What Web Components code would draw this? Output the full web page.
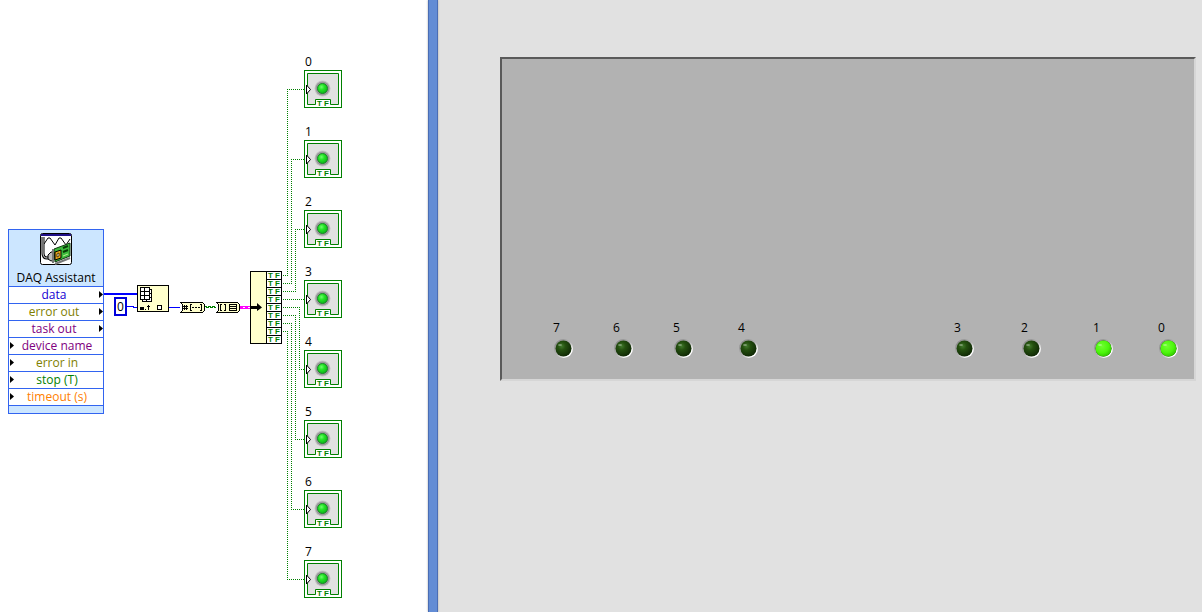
<!DOCTYPE html>
<html lang="en">
<head>
<meta charset="utf-8">
<title>DAQ block diagram and front panel</title>
<style>
body { margin: 0; font: 12px/16px "Open Sans", "Noto Sans", sans-serif; color: #000; }
</style>
</head>
<body>
<vi-workspace></vi-workspace>
<script>
const define = (name, html, setup) => {
  const template = document.createElement('template');
  template.innerHTML = html;
  customElements.define(name, class extends HTMLElement {
    constructor() {
      super();
      this.attachShadow({ mode: 'open' }).append(template.content.cloneNode(true));
    }
    connectedCallback() { if (setup) setup(this, this.shadowRoot); }
  });
};

/* Boolean indicator terminal on the block diagram */
define('bool-terminal', `
<style>
:host { display: grid; grid-template-rows: 16px 38px; width: 38px; }
.label { padding-left: 1px; }
.box { position: relative; height: 38px; }
svg { display: block; }
.tf { position: absolute; left: 11px; width: 16px; bottom: 0; font: bold 8px/8px "Liberation Sans", sans-serif; color: #008000; text-align: center; white-space: nowrap; }
</style>
<div class="label"><slot></slot></div>
<div class="box">
<svg width="38" height="38" viewBox="0 0 38 38" aria-hidden="true">
<defs><radialGradient id="g" cx=".4" cy=".35" r=".7"><stop offset="0" stop-color="#6dff6d"/><stop offset=".4" stop-color="#25e525"/><stop offset="1" stop-color="#08b018"/></radialGradient></defs>
<rect x=".5" y=".5" width="37" height="37" fill="#fff" stroke="#008000"/>
<path d="M3.500 3.500H34.500V34.500H26.500V29.500H11.500V34.500H3.500Z" fill="#e1e1e1" stroke="#008000"/>
<circle cx="18.500" cy="18.500" r="8" fill="#c4c4c4"/>
<circle cx="18.500" cy="18.500" r="7" fill="#999"/>
<circle cx="18.500" cy="18.500" r="5" fill="url(#g)" stroke="#188a28"/>
<path d="M2.500 15V24L6.500 19.500Z" fill="#fff" stroke="#000"/>
</svg><span class="tf">T F</span></div>`);

/* Express VI node */
define('daq-port', `
<style>
:host { display: block; position: relative; height: 16px; border-top: 1px solid #3264f0; background: #fff; text-align: center; line-height: 16px; color: var(--port-color); }
:host([dir=in]) { padding-left: 2px; }
:host([dir=out]) { padding-right: 4px; }
svg { position: absolute; top: 4px; left: 1px; }
:host([dir=out]) svg { left: auto; right: 0; }
</style>
<slot></slot><svg width="4" height="7" aria-hidden="true"><path d="M0 0L4 3.500L0 7Z" fill="#000"/></svg>`);

define('daq-node', `
<style>
:host { display: block; box-sizing: border-box; width: 96px; border: 1px solid #3264f0; background: #cce6ff; }
header { height: 56px; text-align: center; }
header svg { display: block; margin: 0 auto; padding-top: 3px; }
header span { display: block; padding-top: 5px; }
footer { height: 7px; border-top: 1px solid #3264f0; }
</style>
<header>
<svg width="32" height="32" viewBox="0 0 32 32" aria-hidden="true">
<rect x=".5" y=".5" width="31" height="31" rx="2" fill="#fff" stroke="#000"/>
<path d="M1 1H31V3H1Z" fill="#20108a"/>
<path d="M4 11L8 5L10 5L15 12L19 5L21 5L26 12L30 6" fill="none" stroke="#000"/>
<path d="M3 4V20Q3 25 7 25H11" fill="none" stroke="#000" stroke-width="3"/>
<path d="M3 4V20Q3 25 7 25H11" fill="none" stroke="#e4e4e4"/>
<path d="M8 22L11 19L14 19V27L11 28L8 26Z" fill="#bbb" stroke="#000"/>
<path d="M14 16L30 10V23L15 29Z" fill="#3cba3c" stroke="#123812"/>
<path d="M15 31L30 25M13 16V30" stroke="#777" stroke-width="2"/>
<path d="M15 19L21 17V25L15 27Z" fill="#e0a018" stroke="#000"/>
<path d="M17 21L19 20V23L17 24Z" fill="#fff" stroke="#543800"/>
<path d="M23 15L28 13M23 19L28 17" stroke="#063c06" stroke-width="2"/>
<path d="M23 23L28 21" stroke="#b7ef90"/>
</svg>
<span>DAQ Assistant</span></header>
<daq-port dir="out" style="--port-color:#1400d2">data</daq-port>
<daq-port dir="out" style="--port-color:#808000">error out</daq-port>
<daq-port dir="out" style="--port-color:#800080">task out</daq-port>
<daq-port dir="in" style="--port-color:#800080">device name</daq-port>
<daq-port dir="in" style="--port-color:#808000">error in</daq-port>
<daq-port dir="in" style="--port-color:#008000">stop (T)</daq-port>
<daq-port dir="in" style="--port-color:#ff8000">timeout (s)</daq-port>
<footer></footer>`);

/* Numeric constant */
define('num-constant', `
<style>
:host { display: block; box-sizing: border-box; width: 13px; height: 19px; border: 2px solid #0000dc; background: #fff; line-height: 15px; text-align: center; }
</style><slot></slot>`);

/* Splitter with nine Boolean rows */
define('bool-splitter', `
<style>
:host { display: grid; grid-template-columns: 15px 14px; gap: 1px; box-sizing: border-box; width: 32px; border: 1px solid #000; background: #000; }
.body { background: #ffffcc; display: flex; align-items: center; }
ol { list-style: none; margin: 0; padding: 0; display: grid; grid-auto-rows: 7px; gap: 1px; }
li { background: #fff; color: #008000; font: bold 8px/7px "Liberation Sans", sans-serif; text-align: center; white-space: nowrap; }
</style>
<div class="body"><svg width="11" height="9" aria-hidden="true"><path d="M0 3H6V0L11 4.500L6 8V6H0Z" fill="#000"/></svg></div><ol></ol>`,
(el, root) => {
  root.querySelector('ol').innerHTML = '<li>T F</li>'.repeat(9);
});

/* Wires and the small function icons they join */
define('wire-layer', `
<style>:host { display: block; } svg { display: block; }</style>
<svg width="428" height="612" viewBox="0 0 428 612" shape-rendering="crispEdges" aria-hidden="true">
<g fill="none" stroke="#008000" stroke-dasharray="1 1">
<path d="M283 275.500H287.500V89.500H304"/>
<path d="M283 283.500H291.500V159.500H304"/>
<path d="M283 291.500H295.500V229.500H304"/>
<path d="M283 299.500H304"/>
<path d="M283 307.500H299.500V369.500H304"/>
<path d="M283 315.500H295.500V439.500H304"/>
<path d="M283 323.500H291.500V509.500H304"/>
<path d="M283 331.500H287.500V579.500H304"/>
</g>
<path d="M104 294H137" stroke="#0000ff" stroke-width="2"/>
<path d="M127 306.500H133V307.500H138M169 307.500H180" stroke="#0000ff" fill="none"/>
<rect x="137.500" y="285.500" width="31" height="26" fill="#ffffcc" stroke="#000"/>
<path d="M142.500 289.500H151.500V301.500H142.500Z" fill="#fff" stroke="#000"/>
<path d="M140.500 287.500H149.500V299.500H140.500Z" fill="#fff" stroke="#000"/>
<path d="M144.500 287V300M140 291.500H150M140 295.500H150M149 293.500H152M149 297.500H152M146.500 299V302" stroke="#000"/>
<path d="M140 307H144V310H140ZM145 309H146V310H145ZM148 305H149V310H148ZM147 306H150V307H147Z" fill="#000"/>
<rect x="157.500" y="305.500" width="4" height="4" fill="#fff" stroke="#000"/>

<path d="M180.500 302.500H202.500L204.500 304.500V310.500L202.500 312.500H180.500L182.500 310.500V304.500Z" fill="#ffffcc" stroke="#000"/>
<path d="M184.500 305V310M186.500 305V310M183 306.500H188M183 308.500H188" stroke="#000"/>
<path d="M192 304.500H190.500V310.500H192M200 304.500H201.500V310.500H200" fill="none" stroke="#000"/>
<path d="M192 307H194V308H192ZM195 307H197V308H195ZM198 307H200V308H198Z" fill="#000"/>
<path d="M205 306.500H206V307.500H208V306.500H210V307.500H212V306.500H214V307.500H216" fill="none" stroke="#008000"/>

<path d="M216.500 302.500H237.500L239.500 304.500V310.500L237.500 312.500H216.500L218.500 310.500V304.500Z" fill="#ffffcc" stroke="#000"/>
<path d="M222 304.500H220.500V310.500H222M224 304.500H225.500V310.500H224" fill="none" stroke="#000"/>
<path d="M229.500 304.500H236.500V310.500H229.500ZM229 306.500H237M229 308.500H237" fill="none" stroke="#000"/>
<path d="M240 307.500H250" stroke="#ff00ff" stroke-width="3"/>
<path d="M243 307.500H245M248 307.500H250" stroke="#fff"/>
</svg>`);

define('block-diagram', `
<style>
:host { display: block; position: relative; background: #fff; min-height: 612px; overflow: hidden; }
:host > * { position: absolute; }
wire-layer, daq-node, num-constant, bool-splitter, .terminals { position: absolute; }
wire-layer { left: 0; top: 0; }
daq-node { left: 8px; top: 229px; }
num-constant { left: 114px; top: 297px; }
bool-splitter { left: 250px; top: 271px; }
.terminals { left: 304px; top: 54px; display: grid; gap: 16px; }
</style>
<wire-layer></wire-layer>
<daq-node></daq-node>
<num-constant>0</num-constant>
<bool-splitter></bool-splitter>
<div class="terminals"></div>`,
(el, root) => {
  root.querySelector('.terminals').innerHTML =
    Array.from({ length: 8 }, (_, i) => '<bool-terminal>' + i + '</bool-terminal>').join('');
});

/* Round LED on the front panel */
define('panel-led', `
<style>
:host { display: block; width: 22px; }
span { display: block; }
svg { display: block; }
.on { display: none; }
:host([lit]) .on { display: inline; }
</style>
<span><slot></slot></span>
<svg width="22" height="24" viewBox="0 0 22 24" aria-hidden="true">
<defs>
<linearGradient id="rim" x1=".1" y1=".1" x2=".9" y2=".9"><stop offset=".1" stop-color="#909090"/><stop offset=".5" stop-color="#b2b2b2"/><stop offset=".85" stop-color="#fff"/></linearGradient>
<radialGradient id="off" cx=".38" cy=".35" r=".7"><stop offset="0" stop-color="#427a2c"/><stop offset=".35" stop-color="#24500f"/><stop offset="1" stop-color="#0e2604"/></radialGradient>
<radialGradient id="lit" cx=".4" cy=".35" r=".7"><stop offset="0" stop-color="#70ff30"/><stop offset=".6" stop-color="#4cf60c"/><stop offset="1" stop-color="#2fc000"/></radialGradient>
</defs>
<circle cx="10.500" cy="12.500" r="9.500" fill="url(#rim)"/>
<circle cx="10.500" cy="12.500" r="8" fill="url(#off)"/>
<circle class="on" cx="10.500" cy="12.500" r="8" fill="url(#lit)"/>
<ellipse cx="7" cy="9" rx="2" ry="1" fill="#fff" opacity=".35"/>
</svg>`);

define('front-panel', `
<style>
:host { display: block; box-sizing: border-box; padding: 57px 6px 57px 62px; background: #e1e1e1; }
.cluster { position: relative; box-sizing: border-box; height: 324px; border: 2px solid; border-color: #5a5a5a #d6d6d6 #d6d6d6 #5a5a5a; background: #b2b2b2; }
panel-led { position: absolute; top: 261px; }
</style>
<div class="cluster"></div>`,
(el, root) => {
  const leds = [[7, 51], [6, 111], [5, 171], [4, 236], [3, 452], [2, 519], [1, 591], [0, 656]];
  root.querySelector('.cluster').innerHTML = leds.map(([n, x]) =>
    '<panel-led style="left:' + x + 'px"' + (n < 2 ? ' lit' : '') + '>' + n + '</panel-led>').join('');
});

define('vi-workspace', `
<style>
:host { display: grid; grid-template-columns: 428px 10px 1fr; min-height: 100vh; }
.divider { background: #628cd5; border: solid #4a6db4; border-width: 0 1px; box-shadow: 0 0 2px #aaa; z-index: 1; }
</style>
<block-diagram></block-diagram>
<div class="divider"></div>
<front-panel></front-panel>`);
</script>
</body>
</html>
